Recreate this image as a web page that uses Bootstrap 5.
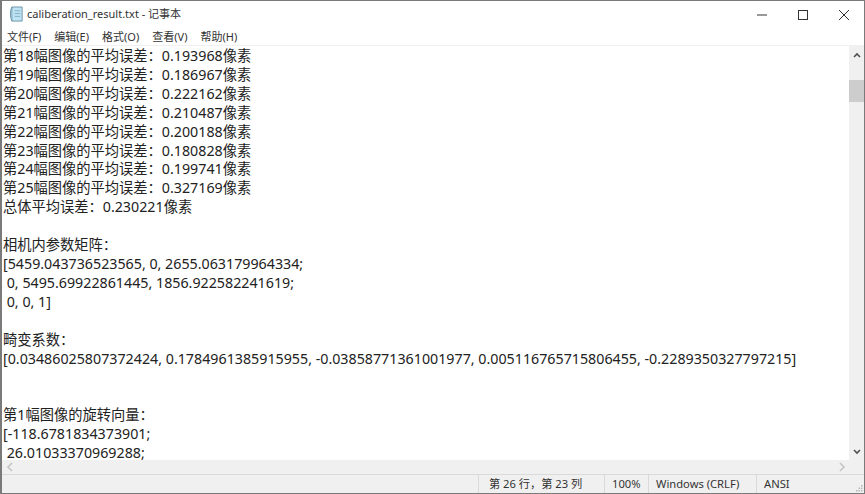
<!DOCTYPE html>
<html lang="zh">
<head>
<meta charset="utf-8">
<title>calibration</title>
<link href="https://cdn.jsdelivr.net/npm/bootstrap@5.3.0/dist/css/bootstrap.min.css" rel="stylesheet">
<style>
html,body{height:494px;width:865px;overflow:hidden;margin:0;background:#fff}
body{font-family:"Noto Sans","Noto Sans CJK SC",sans-serif;color:#1a1a1a}
.win{width:865px;height:494px;border:1px solid #7a7a7a;border-width:1px 1px 1px 2px}
.titlebar{height:27px;font-size:11px;color:#333}
.appicon{width:15px;height:17px;margin-left:7px;margin-right:3px}
.winbtn{width:41px;height:27px}
.menubar{height:17px;font-size:11px;color:#333;padding-left:5px;gap:13px;line-height:17px}
.sep{height:1px;background:#f0f0f0;flex:none}
.midarea{height:414px}
.editor{font-size:14.25px;line-height:18.9px;white-space:pre;overflow:hidden;padding:1px 0 0 1px;color:#222}
.vbar{width:15px;background:#f0f0f0}
.sbtn{height:17px}
.vthumb{width:100%;height:22px;background:#cdcdcd;margin-top:17px}
.hbar{height:14px;background:#f0f0f0;padding-right:18px}
.statusbar{height:20px;background:#f0f0f0;border-top:1px solid #dadada;font-size:11.2px;color:#333}
.cell{height:100%;border-left:1px solid #dadada;padding-left:7px;line-height:18px}
.c1{width:126px;padding-left:10px}.c2{width:44px}.c3{width:108px}.c4{width:108px}
.grip{margin-right:1px;margin-bottom:1px}
</style>
</head>
<body>
<div class="win d-flex flex-column">
  <div class="titlebar d-flex align-items-center">
    <svg class="appicon" viewBox="0 0 16 18"><path d="M3 1h11v15H3z" fill="#bfe3f2" stroke="#6c93a8"/><path d="M3 1c-2 4-2 10 0 15" fill="#8fc4dc" stroke="#6c93a8"/><path d="M6 5h6M6 8h6M6 11h6" stroke="#7fb0c8"/></svg>
    <span class="flex-grow-1">caliberation_result.txt - 记事本</span>
    <div class="d-flex">
      <div class="winbtn d-flex align-items-center justify-content-center"><svg width="10" height="10" viewBox="0 0 10 10"><path d="M0 5h10" stroke="#555" stroke-width="1.2"/></svg></div>
      <div class="winbtn d-flex align-items-center justify-content-center"><svg width="10" height="10" viewBox="0 0 10 10"><rect x=".5" y=".5" width="9" height="9" fill="none" stroke="#333"/></svg></div>
      <div class="winbtn d-flex align-items-center justify-content-center"><svg width="10" height="10" viewBox="0 0 10 10"><path d="M0 0l10 10M10 0L0 10" stroke="#333"/></svg></div>
    </div>
  </div>
  <div class="menubar d-flex"><span>文件(F)</span><span>编辑(E)</span><span>格式(O)</span><span>查看(V)</span><span>帮助(H)</span></div>
  <div class="sep"></div>
  <div class="midarea d-flex">
    <div class="editor flex-grow-1">第18幅图像的平均误差：0.193968像素
第19幅图像的平均误差：0.186967像素
第20幅图像的平均误差：0.222162像素
第21幅图像的平均误差：0.210487像素
第22幅图像的平均误差：0.200188像素
第23幅图像的平均误差：0.180828像素
第24幅图像的平均误差：0.199741像素
第25幅图像的平均误差：0.327169像素
总体平均误差：0.230221像素

相机内参数矩阵：
[5459.043736523565, 0, 2655.063179964334;
 0, 5495.69922861445, 1856.922582241619;
 0, 0, 1]

畸变系数：
[0.03486025807372424, 0.1784961385915955, -0.03858771361001977, 0.005116765715806455, -0.2289350327797215]


第1幅图像的旋转向量：
[-118.6781834373901;
 26.01033370969288;</div>
    <div class="vbar d-flex flex-column">
      <div class="sbtn d-flex align-items-center justify-content-center"><svg width="8" height="6" viewBox="0 0 8 6"><path d="M1 5l3-3 3 3" fill="none" stroke="#505050" stroke-width="1.6"/></svg></div>
      <div class="vthumb"></div>
      <div class="flex-grow-1"></div>
      <div class="sbtn d-flex align-items-center justify-content-center"><svg width="8" height="6" viewBox="0 0 8 6"><path d="M1 1l3 3 3-3" fill="none" stroke="#505050" stroke-width="1.6"/></svg></div>
    </div>
  </div>
  <div class="hbar d-flex align-items-center justify-content-between">
    <svg class="ms-1" width="8" height="10" viewBox="0 0 8 10"><path d="M6 1L2 5l4 4" fill="none" stroke="#c4c4c4" stroke-width="1.6"/></svg>
    <svg width="8" height="10" viewBox="0 0 8 10"><path d="M2 1l4 4-4 4" fill="none" stroke="#c4c4c4" stroke-width="1.6"/></svg>
  </div>
  <div class="statusbar d-flex justify-content-end flex-grow-1">
    <div class="cell c1">第 26 行，第 23 列</div>
    <div class="cell c2">100%</div>
    <div class="cell c3">Windows (CRLF)</div>
    <div class="cell c4 d-flex justify-content-between align-items-end"><span class="align-self-start">ANSI</span><svg class="grip" width="7" height="7" viewBox="0 0 7 7" fill="#b5b5b5"><rect x="5" y="0" width="1.5" height="1.5"/><rect x="2.5" y="2.5" width="1.5" height="1.5"/><rect x="5" y="2.5" width="1.5" height="1.5"/><rect x="0" y="5" width="1.5" height="1.5"/><rect x="2.5" y="5" width="1.5" height="1.5"/><rect x="5" y="5" width="1.5" height="1.5"/></svg></div>
  </div>
</div>
</body>
</html>
